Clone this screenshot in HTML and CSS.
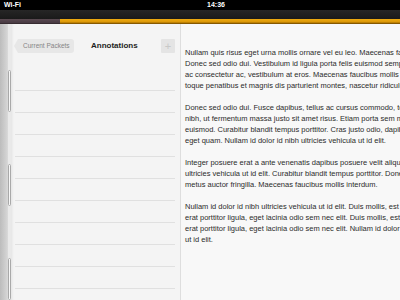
FILE: index.html
```html
<!DOCTYPE html>
<html>
<head>
<meta charset="utf-8">
<link rel="stylesheet" href="styles.css">
</head>
<body>
<div class="screen">
  <div class="status">
    <span class="wifi">Wi-Fi</span>
    <span class="time">14:36</span>
  </div>
  <div class="toolbar"></div>
  <div class="progress"><div class="done"></div><div class="rest"></div></div>
  <div class="main">
    <div class="gutter"></div>
    <div class="tabs">
      <div class="tab"></div>
      <div class="tab"></div>
      <div class="tab"></div>
    </div>
    <div class="sidebar">
      <div class="side-head">
        <div class="back">Current Packets</div>
        <div class="title">Annotations</div>
        <div class="add">+</div>
      </div>
      <div class="rows">
        <div class="row"></div><div class="row"></div><div class="row"></div><div class="row"></div>
        <div class="row"></div><div class="row"></div><div class="row"></div><div class="row"></div>
        <div class="row"></div><div class="row"></div>
      </div>
    </div>
    <div class="content">
      <p>Nullam quis risus eget urna mollis ornare vel eu leo. Maecenas faucibus mollis interdum.<br>Donec sed odio dui. Vestibulum id ligula porta felis euismod semper. Cras mattis<br>ac consectetur ac, vestibulum at eros. Maecenas faucibus mollis interdum. Cum sociis na-<br>toque penatibus et magnis dis parturient montes, nascetur ridiculus mus.</p>
      <p>Donec sed odio dui. Fusce dapibus, tellus ac cursus commodo, tortor mauris condimentum<br>nibh, ut fermentum massa justo sit amet risus. Etiam porta sem malesuada magna mollis<br>euismod. Curabitur blandit tempus porttitor. Cras justo odio, dapibus ac facilisis in,<br>eget quam. Nullam id dolor id nibh ultricies vehicula ut id elit.</p>
      <p>Integer posuere erat a ante venenatis dapibus posuere velit aliquet. Nullam id dolor id nibh<br>ultricies vehicula ut id elit. Curabitur blandit tempus porttitor. Donec ullamcorper nulla non<br>metus auctor fringilla. Maecenas faucibus mollis interdum.</p>
      <p>Nullam id dolor id nibh ultricies vehicula ut id elit. Duis mollis, est non commodo luctus, nisi<br>erat porttitor ligula, eget lacinia odio sem nec elit. Duis mollis, est non commodo luctus, nisi<br>erat porttitor ligula, eget lacinia odio sem nec elit. Nullam id dolor id nibh ultricies vehicula<br>ut id elit.</p>
    </div>
  </div>
</div>
</body>
</html>
```
FILE: styles.css
```css
html, body { margin: 0; padding: 0; }
body { width: 400px; height: 300px; overflow: hidden; background: #f6f6f6; font-family: "Liberation Sans", Arial, sans-serif; }
.screen { width: 400px; height: 300px; display: flex; flex-direction: column; overflow: hidden; }
.status { height: 10px; background: #000; color: #fff; display: flex; align-items: center; font-size: 7px; font-weight: bold; line-height: 10px; }
.wifi { padding-left: 4px; }
.time { margin-left: 186px; }
.toolbar { height: 9px; background: linear-gradient(#262626, #1a1a1a); }
.progress { height: 5px; display: flex; }
.done { width: 60px; background: linear-gradient(#5a4a52 0, #4a3c44 70%, #2e2428 100%); }
.rest { flex: 1; background: linear-gradient(#eeaa10 0, #dc9808 60%, #a06a00 80%, #6e4800 100%); }
.main { flex: 1; display: flex; min-height: 0; }
.gutter { width: 8px; background: linear-gradient(90deg, #bcbcbc, #d2d2d2 80%, #dadada); }
.tabs { width: 3px; display: flex; flex-direction: column; background: #e9e9e9; }
.tab { height: 48px; margin-top: 46px; border: 1px solid #a9a9a9; border-radius: 2px; background: #f7f7f7; box-sizing: content-box; width: 1px; }
.tab + .tab { margin-top: 52px; }
.sidebar { width: 169px; background: #f4f4f4; border-right: 1px solid #dedede; display: flex; flex-direction: column; box-shadow: inset 3px 0 3px -2px rgba(0,0,0,0.08); }
.side-head { height: 45px; display: flex; align-items: center; padding: 0 5px 2px 4px; box-sizing: border-box; }
.back { position: relative; height: 14px; line-height: 14px; font-size: 6.5px; color: #858585; background: #e7e7e7; padding: 0 4px 0 5px; margin-left: 3px; border-radius: 0 3px 3px 0; }
.back::before { content: ""; position: absolute; left: -4px; top: 0; border-top: 7px solid transparent; border-bottom: 7px solid transparent; border-right: 4px solid #e7e7e7; }
.title { flex: 1; text-align: center; font-size: 8px; font-weight: bold; color: #1e1e1e; padding-left: 2px; }
.add { width: 14px; height: 14px; background: #e4e4e4; color: #c8c8c8; font-size: 11px; line-height: 14px; text-align: center; border-radius: 1px; margin-left: 8px; }
.rows { margin: 0 5px 0 4px; }
.row { height: 21px; border-bottom: 1px solid #e0e0e0; }
.content { flex: 1; padding: 23px 0 0 4px; background: #f8f8f8; overflow: hidden; white-space: nowrap; }
.content p { margin: 0 0 11px; font-size: 7.5px; line-height: 11px; color: #2b2b2b; }
```
